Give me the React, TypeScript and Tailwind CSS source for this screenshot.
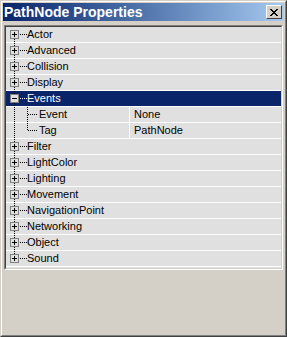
type Row = {
  label: string;
  value?: string;
  child?: boolean;
  open?: boolean;
  selected?: boolean;
  lastChild?: boolean;
};

const rows: Row[] = [
  { label: "Actor" },
  { label: "Advanced" },
  { label: "Collision" },
  { label: "Display" },
  { label: "Events", open: true, selected: true },
  { label: "Event", value: "None", child: true },
  { label: "Tag", value: "PathNode", child: true, lastChild: true },
  { label: "Filter" },
  { label: "LightColor" },
  { label: "Lighting" },
  { label: "Movement" },
  { label: "NavigationPoint" },
  { label: "Networking" },
  { label: "Object" },
  { label: "Sound" },
];

// tree lines + expand box on the left of each row
function Gutter({ row, first, last }: { row: Row; first: boolean; last: boolean }) {
  const dot = row.selected ? "#ffffff" : "#000000";
  const vTop = first ? 8 : 0;
  const vBottom = last ? 8 : 16;
  return (
    <svg width={row.child ? 33 : 21} height={16} className="shrink-0 self-start" shapeRendering="crispEdges">
      <line x1={8.5} y1={vTop} x2={8.5} y2={vBottom} stroke="#000" strokeDasharray="1 1" />
      {row.child ? (
        <>
          <line x1={21.5} y1={0} x2={21.5} y2={row.lastChild ? 8 : 16} stroke="#000" strokeDasharray="1 1" />
          <line x1={22} y1={7.5} x2={32} y2={7.5} stroke="#000" strokeDasharray="1 1" />
        </>
      ) : (
        <>
          <line x1={14} y1={7.5} x2={21} y2={7.5} stroke={dot} strokeDasharray="1 1" />
          <rect x={4.5} y={3.5} width={8} height={8} fill="#e0e0e0" stroke="#808080" />
          <line x1={6} y1={7.5} x2={11} y2={7.5} stroke="#000" />
          {!row.open && <line x1={8.5} y1={5} x2={8.5} y2={10} stroke="#000" />}
        </>
      )}
    </svg>
  );
}

export default function App() {
  return (
    <div
      className="w-[287px] h-[337px] bg-[#d4d0c8] border border-t-[#d4d0c8] border-l-[#d4d0c8] border-r-[#404040] border-b-[#404040] overflow-hidden"
      style={{ fontFamily: '"Liberation Sans", Arial, sans-serif' }}
    >
      <div className="h-full border border-t-white border-l-white border-r-[#808080] border-b-[#808080] p-px flex flex-col">
        {/* title bar */}
        <div className="h-[18px] flex items-center justify-between pl-[1px] pr-[2px] bg-gradient-to-r from-[#0a246a] to-[#a6caf0]">
          <span className="text-white font-bold text-[14px] leading-none">PathNode Properties</span>
          <button className="w-[16px] h-[14px] bg-[#d4d0c8] border border-t-white border-l-white border-r-[#404040] border-b-[#404040] flex items-center justify-center">
            <svg width="8" height="7" viewBox="0 0 8 7" shapeRendering="crispEdges">
              <path d="M0 0h2v1H0zM6 0h2v1H6zM1 1h2v1H1zM5 1h2v1H5zM2 2h4v1H2zM3 3h2v1H3zM2 4h4v1H2zM1 5h2v1H1zM5 5h2v1H5zM0 6h2v1H0zM6 6h2v1H6z" fill="#000" />
            </svg>
          </button>
        </div>

        {/* property grid */}
        <div className="mt-[4px] mx-px border border-t-[#808080] border-l-[#808080] border-r-white border-b-white">
          <div className="border border-t-[#404040] border-l-[#404040] border-r-[#d4d0c8] border-b-[#d4d0c8] bg-[#e0e0e0] pb-px">
            {rows.map((row, i) => (
              <div
                key={row.label}
                className={
                  row.selected
                    ? "h-[16px] flex border-b border-white text-[11px] leading-none bg-[#0a246a] text-white"
                    : "h-[16px] flex border-b border-white text-[11px] leading-none text-black"
                }
              >
                <Gutter row={row} first={i === 0} last={i === rows.length - 1} />
                {row.child ? (
                  <>
                    <div className="w-[90px] flex items-center">{row.label}</div>
                    <div className="flex-1 flex items-center border-l border-white pl-[4px]">{row.value}</div>
                  </>
                ) : (
                  <div className="flex-1 flex items-center">{row.label}</div>
                )}
              </div>
            ))}
          </div>
        </div>
      </div>
    </div>
  );
}
